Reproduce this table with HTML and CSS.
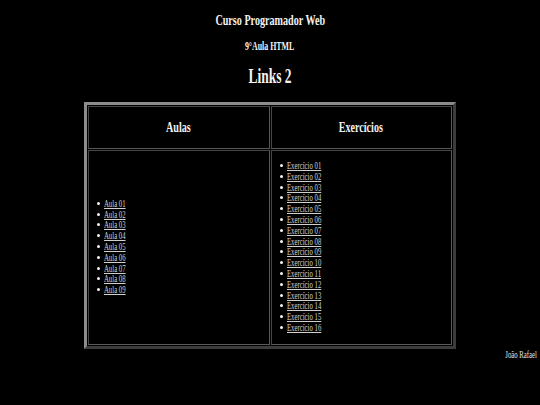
FILE: index.html
```html
<!DOCTYPE html>
<html lang="pt-BR">
<head>
<meta charset="utf-8">
<title>Links 2</title>
<link rel="stylesheet" href="styles.css">
</head>
<body>
<div class="page">
  <h2 class="title"><span class="cx">Curso Programador Web</span></h2>
  <h3 class="subtitle"><span class="cx">9°Aula HTML</span></h3>
  <h1 class="heading"><span class="cx">Links 2</span></h1>
  <table class="links">
    <tr>
      <th><span class="cx">Aulas</span></th>
      <th><span class="cx">Exercícios</span></th>
    </tr>
    <tr>
      <td>
        <ul class="list">
          <li><a class="lnk" href="#">Aula 01</a></li>
          <li><a class="lnk" href="#">Aula 02</a></li>
          <li><a class="lnk" href="#">Aula 03</a></li>
          <li><a class="lnk" href="#">Aula 04</a></li>
          <li><a class="lnk" href="#">Aula 05</a></li>
          <li><a class="lnk" href="#">Aula 06</a></li>
          <li><a class="lnk" href="#">Aula 07</a></li>
          <li><a class="lnk" href="#">Aula 08</a></li>
          <li><a class="lnk" href="#">Aula 09</a></li>
        </ul>
      </td>
      <td>
        <ul class="list">
          <li><a class="lnk" href="#">Exercício 01</a></li>
          <li><a class="lnk" href="#">Exercício 02</a></li>
          <li><a class="lnk" href="#">Exercício 03</a></li>
          <li><a class="lnk" href="#">Exercício 04</a></li>
          <li><a class="lnk" href="#">Exercício 05</a></li>
          <li><a class="lnk" href="#">Exercício 06</a></li>
          <li><a class="lnk" href="#">Exercício 07</a></li>
          <li><a class="lnk" href="#">Exercício 08</a></li>
          <li><a class="lnk" href="#">Exercício 09</a></li>
          <li><a class="lnk" href="#">Exercício 10</a></li>
          <li><a class="lnk" href="#">Exercício 11</a></li>
          <li><a class="lnk" href="#">Exercício 12</a></li>
          <li><a class="lnk" href="#">Exercício 13</a></li>
          <li><a class="lnk" href="#">Exercício 14</a></li>
          <li><a class="lnk" href="#">Exercício 15</a></li>
          <li><a class="lnk" href="#">Exercício 16</a></li>
        </ul>
      </td>
    </tr>
  </table>
  <div class="author"><span class="rx">João Rafael</span></div>
</div>
</body>
</html>
```
FILE: styles.css
```css
html, body {
  margin: 0;
  padding: 0;
  background: #000;
}

body {
  font-family: "Liberation Serif", "Times New Roman", serif;
  color: #f2f2f2;
}

.page {
  padding-top: 11px;
}

/* condensed serif look of the original rendering */
.cx,
.rx,
.lnk {
  display: inline-block;
  transform: scaleX(0.675);
}

.cx { transform-origin: 50% 50%; }
.rx { transform-origin: 100% 50%; }
.lnk { transform-origin: 0 50%; }

.title {
  font-size: 15px;
  line-height: 18px;
  margin: 0 0 11px;
  text-align: center;
  font-weight: bold;
}

.subtitle {
  font-size: 11.7px;
  line-height: 13px;
  margin: 0 0 11px;
  text-align: center;
  font-weight: bold;
}

.heading {
  font-size: 20px;
  line-height: 24px;
  margin: 0 0 14px;
  text-align: center;
  font-weight: bold;
}

.links {
  width: 372px;
  margin: 0 auto;
  table-layout: fixed;
  border-collapse: separate;
  border-spacing: 1px;
  border-style: solid;
  border-width: 3px;
  border-color: #8c8c8c #3c3c3c #3c3c3c #8c8c8c;
}

.links th,
.links td {
  width: 50%;
  border-style: solid;
  border-width: 1px;
  border-color: #474747 #5a5a5a #5a5a5a #474747;
  padding: 0;
}

.links th {
  font-size: 15px;
  line-height: 18px;
  padding: 11px 0 12px;
  font-weight: bold;
  color: #f0f0f0;
  text-align: center;
}

.links td {
  vertical-align: middle;
}

.list {
  margin: 10px 0;
  padding-left: 15px;
  list-style: none;
  font-size: 10px;
  line-height: 10.8px;
  color: #ffffff;
}

.list li::before {
  content: "";
  display: inline-block;
  width: 3px;
  height: 3px;
  border-radius: 50%;
  background: #f4f4f4;
  margin: 0 4px 0 -7px;
  vertical-align: 2px;
}

.list a {
  color: #d0d0d0;
  text-decoration: underline;
}

.author {
  text-align: right;
  padding-right: 3px;
  font-size: 10px;
  line-height: 11px;
  color: #e0e0e0;
}
```
